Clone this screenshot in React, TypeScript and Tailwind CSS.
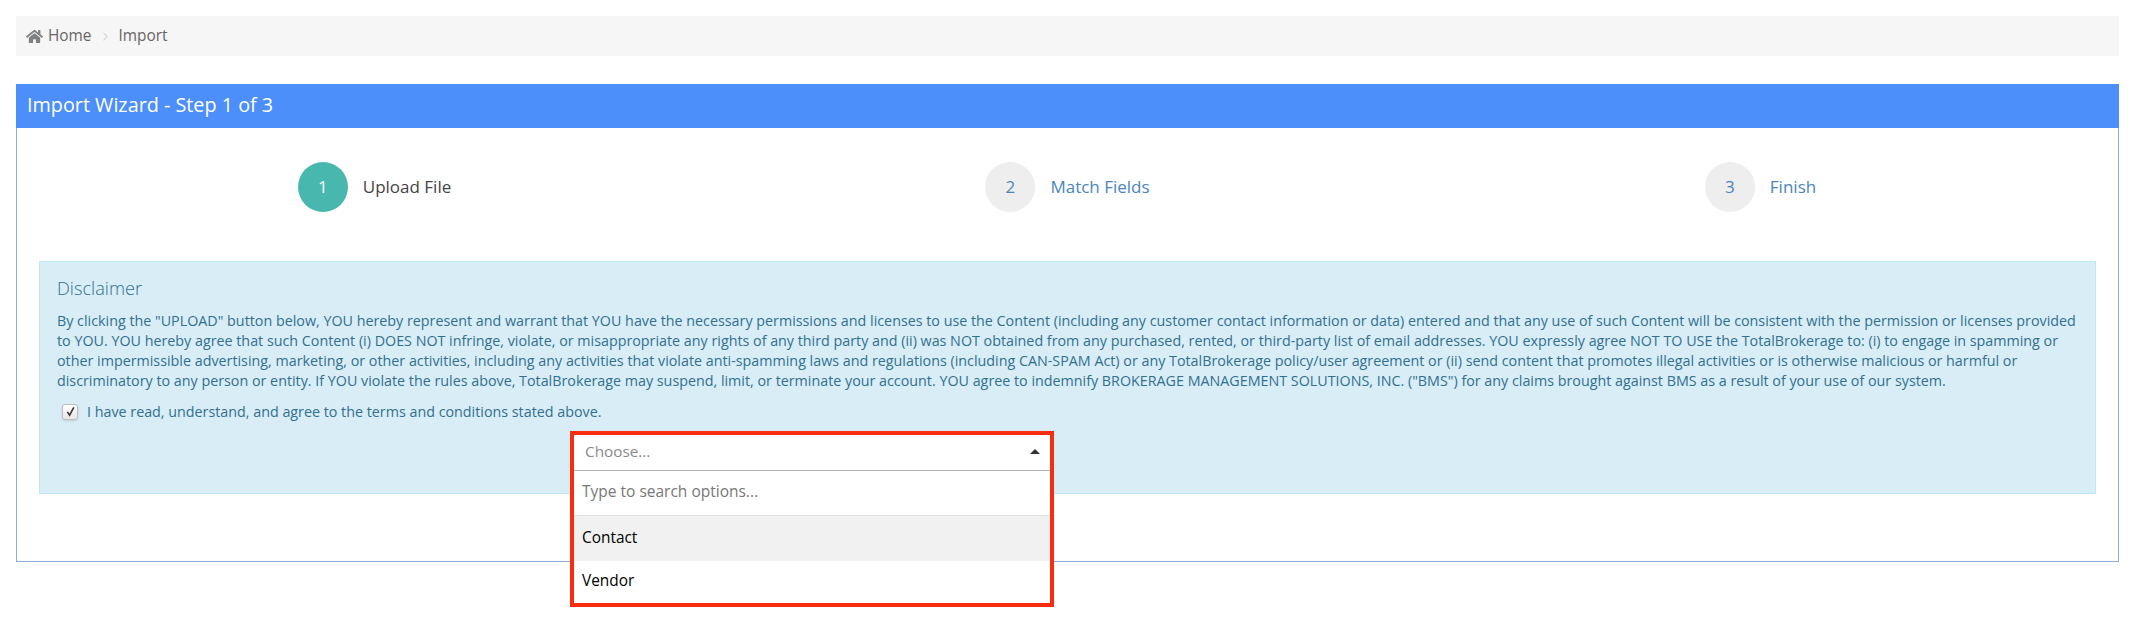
import { FaHome } from 'react-icons/fa'
import { ChevronRight } from 'lucide-react'

const steps = [
  { n: 1, label: 'Upload File', active: true },
  { n: 2, label: 'Match Fields', active: false },
  { n: 3, label: 'Finish', active: false },
]

function Step({ n, label, active }: { n: number; label: string; active: boolean }) {
  return (
    <div className="flex items-center justify-center gap-[15px]">
      <span
        className={
          active
            ? 'flex h-[50px] w-[50px] items-center justify-center rounded-full bg-[#48b8ae] text-[17px] text-white'
            : 'flex h-[50px] w-[50px] items-center justify-center rounded-full bg-[#eeeeee] text-[17px] text-[#4a86bd]'
        }
      >
        {n}
      </span>
      <span className={active ? 'text-[17px] text-[#444444]' : 'text-[17px] text-[#4a86bd]'}>{label}</span>
    </div>
  )
}

export default function App() {
  return (
    <div className="h-[618px] overflow-hidden bg-white pt-4 pr-[14px] pl-4 font-['Open_Sans',sans-serif] text-[14px]">
      <nav className="flex h-10 items-center bg-[#f6f6f6] pl-[10px] text-[15.4px] text-[#666666]">
        <FaHome className="mr-[5px] text-[17px] text-[#808080]" />
        <span>Home</span>
        <ChevronRight className="mx-[7px] h-[13px] w-[13px] text-[#aaaaaa]" strokeWidth={1.25} />
        <span>Import</span>
      </nav>

      <section className="mt-7 h-[478px] border border-[#8fa9d8]">
        <h2 className="-mx-px -mt-px flex h-[44px] items-center bg-[#4c8ffa] pb-[2px] pl-[11px] text-[19.8px] text-white">
          Import Wizard - Step 1 of 3
        </h2>
        <div className="grid grid-cols-3 px-[11px] pt-[34px]">
          {steps.map((s) => (
            <Step key={s.n} {...s} />
          ))}
        </div>
        <div className="relative mx-[22px] mt-[49px] h-[233px] border border-[#bce8f1] bg-[#d9edf7] px-[17px] pt-[13px] text-[#31708f]">
          <h4 className="text-[18.2px] leading-[26px] font-light">Disclaimer</h4>
          <p className="mt-[10px] text-[14.3px] leading-[20px]">
            By clicking the "UPLOAD" button below, YOU hereby represent and warrant that YOU have the necessary permissions and licenses to use the Content (including any customer contact information or data) entered and that any use of such Content will be consistent with the permission or licenses provided to YOU. YOU hereby agree that such Content (i) DOES NOT infringe, violate, or misappropriate any rights of any third party and (ii) was NOT obtained from any purchased, rented, or third-party list of email addresses. YOU expressly agree NOT TO USE the TotalBrokerage to: (i) to engage in spamming or other impermissible advertising, marketing, or other activities, including any activities that violate anti-spamming laws and regulations (including CAN-SPAM Act) or any TotalBrokerage policy/user agreement or (ii) send content that promotes illegal activities or is otherwise malicious or harmful or discriminatory to any person or entity. If YOU violate the rules above, TotalBrokerage may suspend, limit, or terminate your account. YOU agree to indemnify BROKERAGE MANAGEMENT SOLUTIONS, INC. ("BMS") for any claims brought against BMS as a result of your use of our system.
          </p>
          <label className="mt-[10px] flex items-center pl-[5px] text-[14.3px]">
            <span className="flex h-4 w-4 items-center justify-center rounded-[3px] border border-[#bdbdbd] bg-gradient-to-b from-white to-[#e6e6e6] shadow-sm">
              <svg viewBox="0 0 12 12" className="h-[11px] w-[11px]">
                <path d="M2.6 6.4 5 10 9.6 1.6" fill="none" stroke="#333333" strokeWidth="1.7" />
              </svg>
            </span>
            <span className="ml-[9px]">I have read, understand, and agree to the terms and conditions stated above.</span>
          </label>

          <div className="absolute top-[169px] left-[530px] z-10 w-[484px] border-[4px] border-[#f72d0e] bg-white">
            <div className="flex h-[36px] items-center justify-between border-b border-[#b3b3b3] pr-[10px] pb-[2px] pl-[11px] text-[#8a8a8a]">
              <span className="text-[15.3px]">Choose...</span>
              <span className="h-0 w-0 border-x-[5px] border-b-[5px] border-x-transparent border-b-[#333333]" />
            </div>
            <div className="flex h-[45px] items-center border-b border-[#dddddd] pb-[2px] pl-2 text-[15.5px] text-[#777777]">Type to search options...</div>
            <div className="flex h-[45px] items-center bg-[#f1f1f1] pb-[2px] pl-2 text-[15.4px] text-black">Contact</div>
            <div className="flex h-[42px] items-center pb-[2px] pl-2 text-[15.4px] text-black">Vendor</div>
          </div>
        </div>
      </section>
    </div>
  )
}
